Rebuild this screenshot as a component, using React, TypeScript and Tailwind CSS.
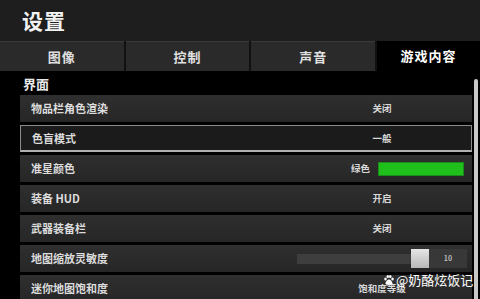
import type { ReactNode } from "react";

const font = { fontFamily: '"Noto Sans CJK SC", "Noto Sans", sans-serif' };

const tabs = ["图像", "控制", "声音", "游戏内容"];

type Row = { label: string; value?: ReactNode; selected?: boolean };

function Slider() {
  return (
    <div className="flex h-[19px] w-[170px] shrink-0 items-center">
      <div className="h-[10px] flex-1 bg-[#3e3e3e]" />
      <div className="h-[19px] w-[18px] shrink-0 bg-gradient-to-b from-[#e6e6e6] to-[#b8b8b8]" />
      <div className="flex h-[19px] w-[38px] shrink-0 items-center justify-center bg-[#383838] text-[7px] text-[#bbbbbb]">
        10
      </div>
    </div>
  );
}

const rows: Row[] = [
  { label: "物品栏角色渲染", value: "关闭" },
  { label: "色盲模式", value: "一般", selected: true },
  {
    label: "准星颜色",
    value: (
      <div className="flex w-full items-center">
        <span className="w-[86px] pr-[8px] text-right">绿色</span>
        <div className="h-[14px] w-[86px] border border-[#1a8a18] bg-[#20c01c]" />
      </div>
    ),
  },
  { label: "装备 HUD", value: "开启" },
  { label: "武器装备栏", value: "关闭" },
  { label: "地图缩放灵敏度", value: <Slider /> },
  { label: "迷你地图饱和度", value: "饱和度等级" },
];

export default function App() {
  return (
    <div className="relative h-[299px] w-[480px] overflow-hidden bg-black text-white" style={font}>
      <div className="flex h-[41px] items-center bg-[#1e1e1e] px-[22px]">
        <h1 className="text-[21px] font-bold leading-none tracking-[1px] text-[#f2f2f2]">设置</h1>
      </div>
      <div className="flex h-[30px] gap-[2px] bg-[#111111]">
        {tabs.map((t, i) => (
          <div
            key={t}
            className={`flex items-center justify-center text-[13px] font-bold tracking-[1px] ${
              i === 3
                ? "w-[103px] bg-black text-white"
                : "flex-1 border-t border-[#3a3a3a] bg-[#2a2a2a] text-[#e0e0e0]"
            }`}
          >
            {t}
          </div>
        ))}
      </div>
      <div className="flex pl-[20px] pr-[2px]">
        <div className="flex-1">
          <div className="flex h-[24px] items-end pb-[2px] pl-[3px] text-[13px] font-bold text-[#e8e8e8]">界面</div>
          <div className="flex flex-col gap-[3px]">
            {rows.map((r) => (
              <div
                key={r.label}
                className={`flex h-[27px] items-center ${
                  r.selected
                    ? "border border-b-2 border-[#8c8c8c] border-b-[#b0b0b0] bg-[#1b1b1b]"
                    : "bg-gradient-to-b from-[#2f2f2f] to-[#262626]"
                }`}
              >
                <span className="w-[272px] shrink-0 pl-[11px] text-[11px] font-bold text-[#dcdcdc]">{r.label}</span>
                <div className="flex flex-1 items-center justify-center whitespace-nowrap text-[9.5px] font-bold text-[#d8d8d8]">
                  {r.value}
                </div>
              </div>
            ))}
          </div>
        </div>
        <div className="ml-[2px] mt-[8px] h-[230px] w-[4px] rounded-sm bg-[#c8c8c8]" />
      </div>
      <div className="absolute left-[383px] top-[273px] flex items-center gap-[1px] whitespace-nowrap text-[13px] leading-none text-white">
        <svg width="12" height="12" viewBox="0 0 24 24" fill="white">
          <ellipse cx="5" cy="10" rx="2.5" ry="3" />
          <ellipse cx="9.5" cy="5" rx="2.5" ry="3" />
          <ellipse cx="14.5" cy="5" rx="2.5" ry="3" />
          <ellipse cx="19" cy="10" rx="2.5" ry="3" />
          <path d="M12 11c-3 0-7 5-7 8 0 2 2 3 4 2.5 1-.3 2-.5 3-.5s2 .2 3 .5c2 .5 4-.5 4-2.5 0-3-4-8-7-8z" />
        </svg>
        <span>@奶酪炫饭记</span>
      </div>
    </div>
  );
}
